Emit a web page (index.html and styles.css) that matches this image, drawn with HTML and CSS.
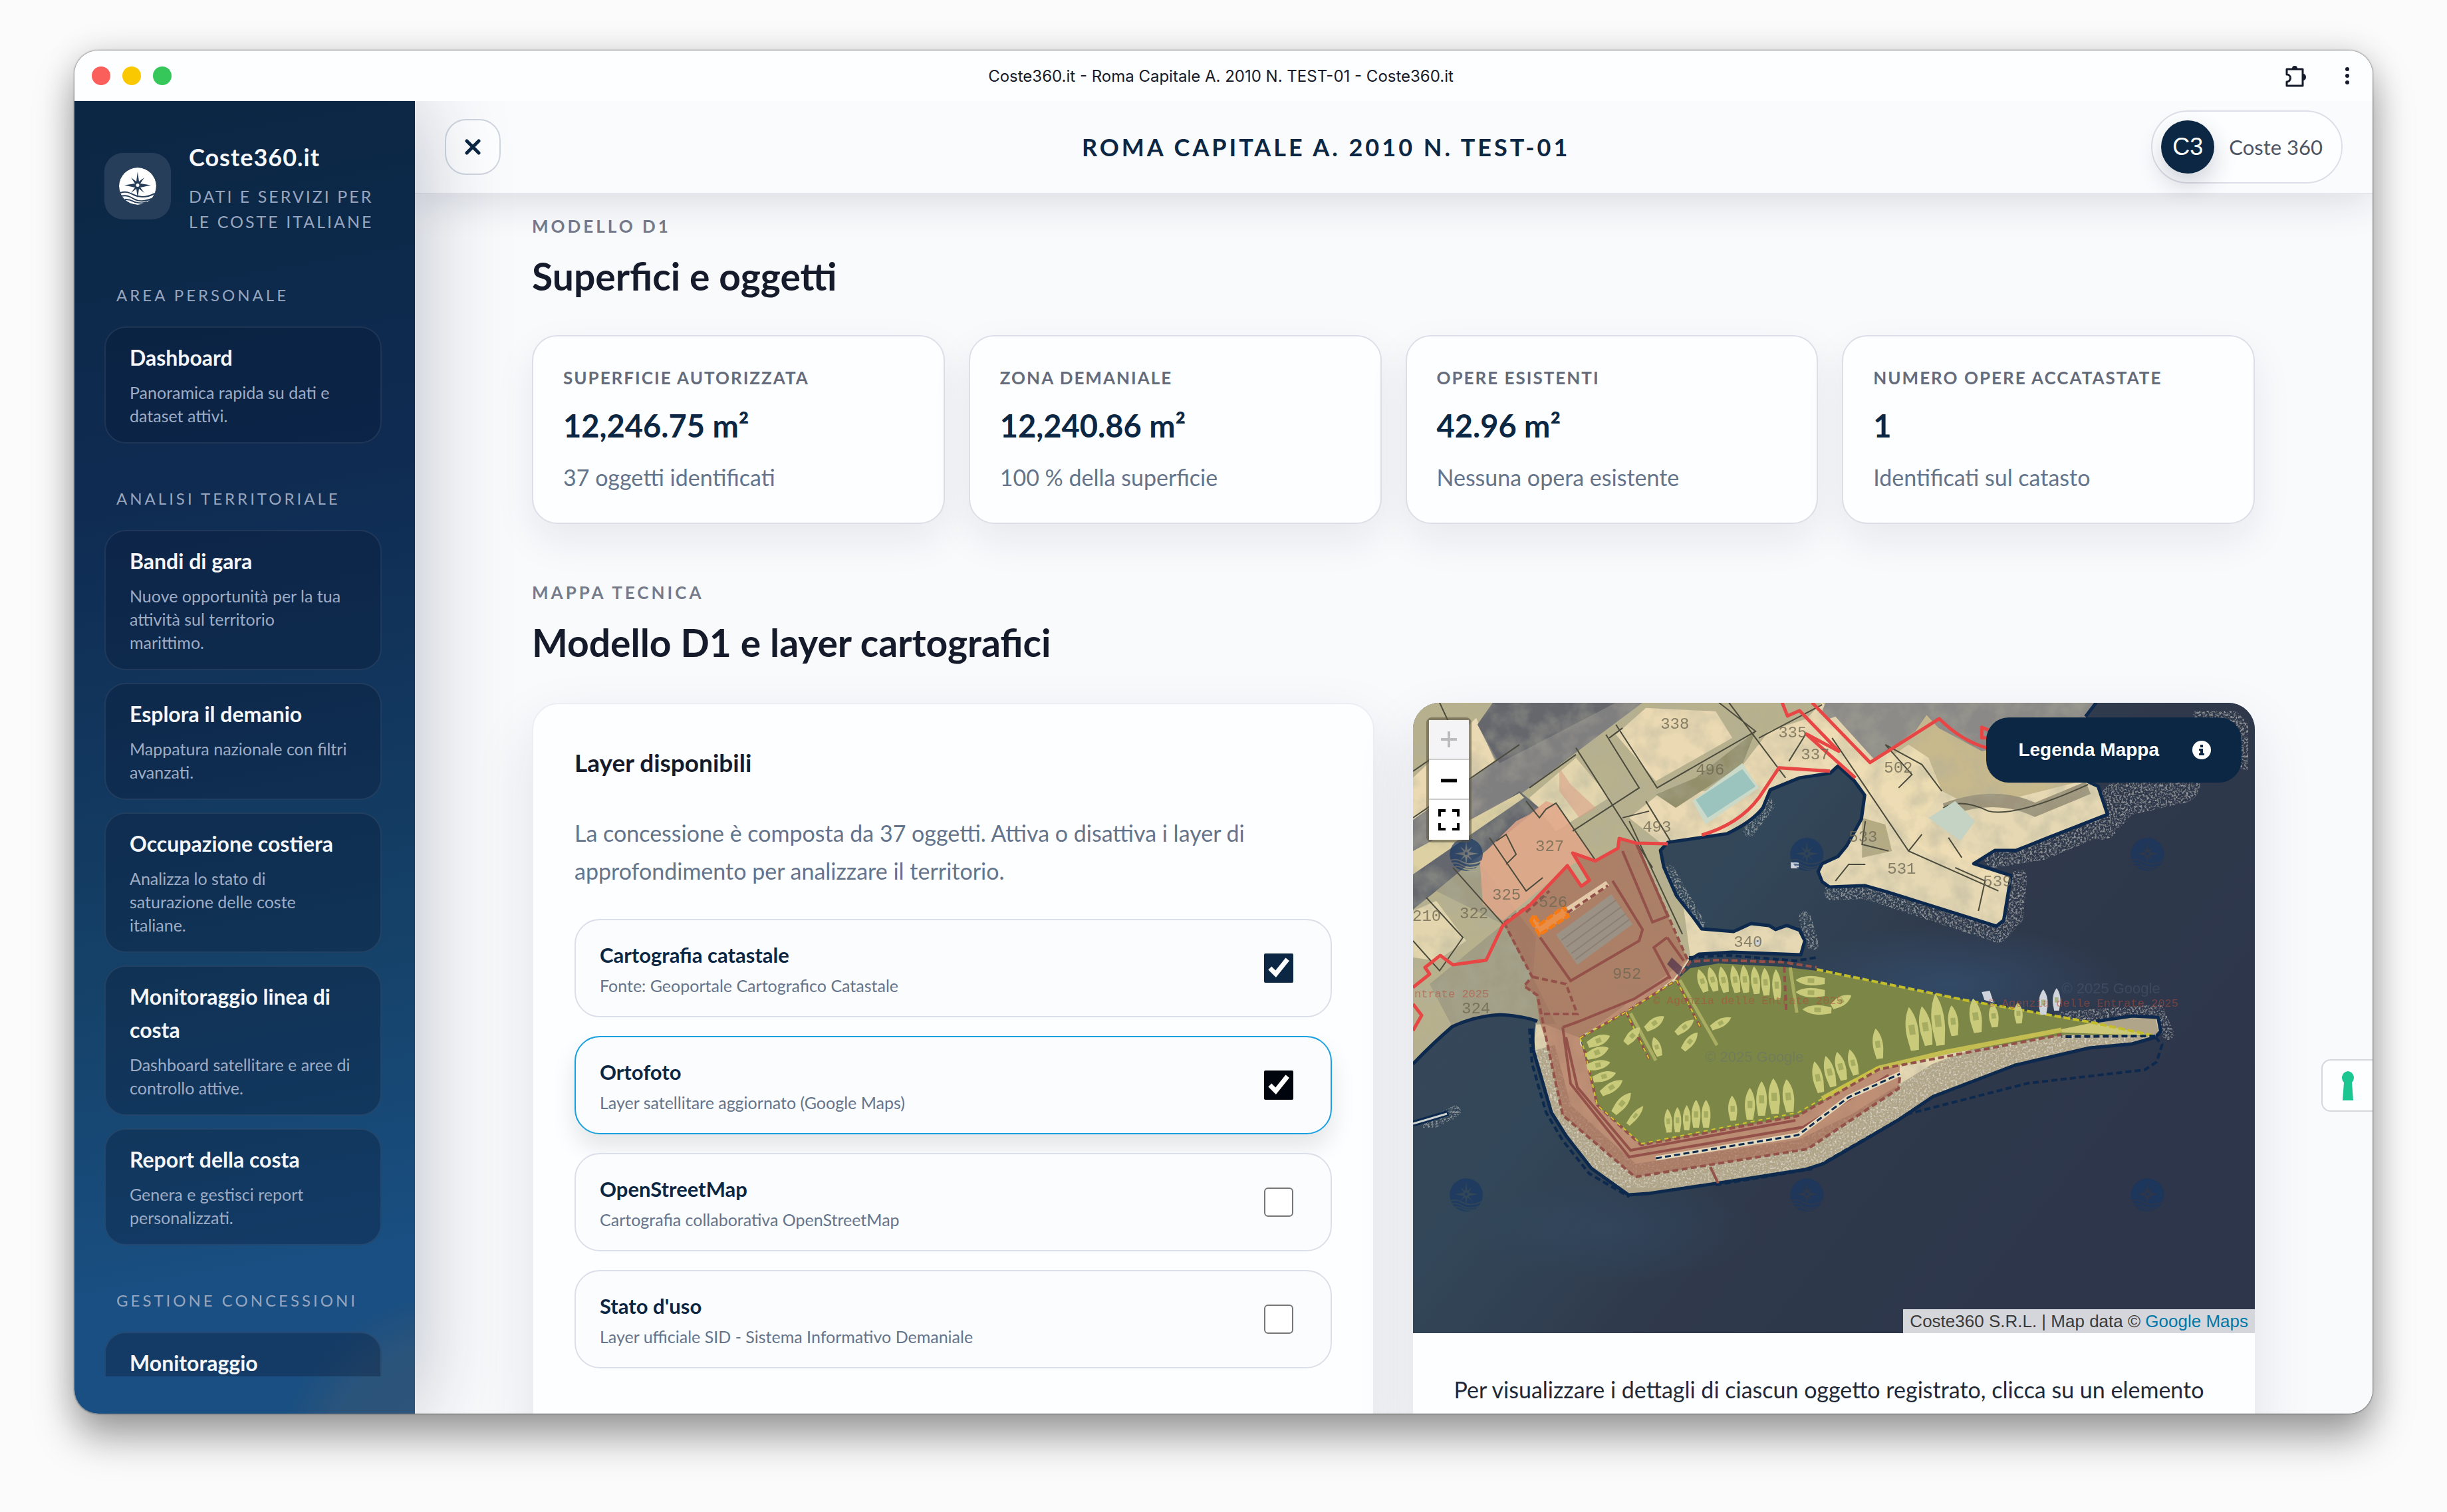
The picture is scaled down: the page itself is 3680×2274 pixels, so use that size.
FILE: index.html
```html
<!DOCTYPE html>
<html lang="it">
<head>
<meta charset="utf-8">
<title>Coste360.it - Roma Capitale A. 2010 N. TEST-01 - Coste360.it</title>
<link rel="stylesheet" href="styles.css">
</head>
<body>
<svg class="defs" aria-hidden="true">
  <defs>
    <mask id="compass-mask">
      <circle cx="28" cy="28" r="28" fill="#fff"/>
      <path fill="#000" d="M28 6L30 21L38 15L32 24L48 26.500L32 30L38 38L30 32L28 46L26 32L18 38L24 30L8 26.500L24 24L18 15L26 21z"/>
      <circle cx="28" cy="26.500" r="2.500" fill="#fff"/>
      <g fill="none" stroke="#000" stroke-width="2">
        <path d="M2 38c9-3 14 0 20 3s16 6 32-2"/>
        <path d="M3 43c9-2 14 1 19 4s14 5 27 0"/>
        <path d="M9 48c8-1 11 3 15 4s11 3 18 0"/>
      </g>
    </mask>
    <symbol id="compass" viewBox="0 0 56 56">
      <circle cx="28" cy="28" r="28" fill="currentColor" mask="url(#compass-mask)"/>
    </symbol>
  </defs>
</svg>

<div class="window">
  <header class="titlebar">
    <div class="lights"><span class="red"></span><span class="yellow"></span><span class="green"></span></div>
    <div class="window-title">Coste360.it - Roma Capitale A. 2010 N. TEST-01 - Coste360.it</div>
    <div class="window-tools">
      <button type="button" aria-label="Estensioni">
        <svg width="34" height="34" viewBox="0 0 34 34"><path d="M3 7h24v25H3v-6a5 5 0 0 0 0-11z" fill="none" stroke="#161b2c" stroke-width="3" stroke-linejoin="round"/><path d="M11 6a4 4 0 0 1 8 0zM28 14a4 5 0 0 1 0 10z" fill="#161b2c"/></svg>
      </button>
      <button type="button" aria-label="Menu">
        <svg width="8" height="34" viewBox="0 0 8 34"><g fill="#161b2c"><circle cx="4" cy="7" r="3"/><circle cx="4" cy="17" r="3"/><circle cx="4" cy="27" r="3"/></g></svg>
      </button>
    </div>
  </header>

  <div class="app">
    <aside class="sidebar">
      <div class="brand">
        <div class="brand-logo"><svg width="56" height="56"><use href="#compass"/></svg></div>
        <div>
          <div class="brand-name">Coste360.it</div>
          <div class="brand-sub">Dati e servizi per<br>le coste italiane</div>
        </div>
      </div>
      <nav class="nav">
        <h2 class="nav-label">Area personale</h2>
        <a class="nav-card" href="#"><strong>Dashboard</strong><span>Panoramica rapida su dati e<br>dataset attivi.</span></a>
        <h2 class="nav-label">Analisi territoriale</h2>
        <a class="nav-card" href="#"><strong>Bandi di gara</strong><span>Nuove opportunità per la tua<br>attività sul territorio<br>marittimo.</span></a>
        <a class="nav-card" href="#"><strong>Esplora il demanio</strong><span>Mappatura nazionale con filtri<br>avanzati.</span></a>
        <a class="nav-card" href="#"><strong>Occupazione costiera</strong><span>Analizza lo stato di<br>saturazione delle coste<br>italiane.</span></a>
        <a class="nav-card" href="#"><strong>Monitoraggio linea di<br>costa</strong><span>Dashboard satellitare e aree di<br>controllo attive.</span></a>
        <a class="nav-card" href="#"><strong>Report della costa</strong><span>Genera e gestisci report<br>personalizzati.</span></a>
        <h2 class="nav-label">Gestione concessioni</h2>
        <a class="nav-card" href="#"><strong>Monitoraggio</strong></a>
      </nav>
    </aside>

    <main class="main">
      <div class="topbar">
        <button class="close" type="button" aria-label="Chiudi menu">
          <svg width="24" height="24" viewBox="0 0 24 24"><path d="M3 3l18 18M21 3L3 21" stroke="#0b2743" stroke-width="5" stroke-linecap="round"/></svg>
        </button>
        <h1>Roma Capitale A. 2010 N. TEST-01</h1>
        <button class="user" type="button"><span class="avatar">C3</span>Coste 360</button>
      </div>

      <div class="content">
        <p class="eyebrow">Modello D1</p>
        <h2 class="title">Superfici e oggetti</h2>
        <div class="metrics">
          <article class="metric"><h3>Superficie autorizzata</h3><strong>12,246.75 m²</strong><p>37 oggetti identificati</p></article>
          <article class="metric"><h3>Zona demaniale</h3><strong>12,240.86 m²</strong><p>100 % della superficie</p></article>
          <article class="metric"><h3>Opere esistenti</h3><strong>42.96 m²</strong><p>Nessuna opera esistente</p></article>
          <article class="metric"><h3>Numero opere accatastate</h3><strong>1</strong><p>Identificati sul catasto</p></article>
        </div>

        <p class="eyebrow">Mappa tecnica</p>
        <h2 class="title">Modello D1 e layer cartografici</h2>
        <div class="panels">
          <section class="layers">
            <h3>Layer disponibili</h3>
            <p>La concessione è composta da 37 oggetti. Attiva o disattiva i layer di<br>approfondimento per analizzare il territorio.</p>
            <div class="options">
              <label class="option"><span><strong>Cartografia catastale</strong><small>Fonte: Geoportale Cartografico Catastale</small></span><input type="checkbox" checked></label>
              <label class="option active"><span><strong>Ortofoto</strong><small>Layer satellitare aggiornato (Google Maps)</small></span><input type="checkbox" checked></label>
              <label class="option"><span><strong>OpenStreetMap</strong><small>Cartografia collaborativa OpenStreetMap</small></span><input type="checkbox"></label>
              <label class="option"><span><strong>Stato d'uso</strong><small>Layer ufficiale SID - Sistema Informativo Demaniale</small></span><input type="checkbox"></label>
            </div>
          </section>

          <section class="map-card">
            <div class="map">
              <svg class="map-drawing" viewBox="25 17 1266 948" preserveAspectRatio="xMidYMid slice" role="img" aria-label="Mappa della concessione">
                <defs>
                  <linearGradient id="sea" x1="0" y1="0" x2="1" y2=".6"><stop offset="0" stop-color="#3b4656"/><stop offset=".4" stop-color="#324759"/><stop offset=".65" stop-color="#2f394b"/><stop offset="1" stop-color="#2d364b"/></linearGradient>
                  <radialGradient id="basin"><stop offset="0" stop-color="#34567a" stop-opacity=".6"/><stop offset="1" stop-color="#34567a" stop-opacity="0"/></radialGradient>
                  <filter id="rocks" x="0" y="0" width="1" height="1">
                    <feTurbulence type="fractalNoise" baseFrequency=".32" numOctaves="3" seed="4"/>
                    <feColorMatrix values="0 1.200 0 0 .1  0 1.200 0 0 .08  0 1.200 0 0 .02  5 0 0 0 -2.300"/>
                    <feComposite operator="in" in2="SourceGraphic"/>
                  </filter>
                  <filter id="ground" x="0" y="0" width="1" height="1">
                    <feTurbulence type="fractalNoise" baseFrequency=".03" numOctaves="4" seed="9"/>
                    <feColorMatrix values="0 0 0 0 .42  0 0 0 0 .42  0 0 0 0 .32  2.400 0 0 0 -.95"/>
                    <feComposite operator="in" in2="SourceGraphic"/>
                  </filter>
                  <path id="mainland" d="M25 17V560Q55 529 84 504Q118 488 156 486L210 495L206 540L233 633L255 668L293 717L349 757L378 755L472 741L614 719L642 710L699 677L755 644L807 609L930 562L1042 536L1106 530L1141 520L1149 511L1145 490L1106 488L1052 496L1004 509L827 542L726 565L604 635L368 682L302 622L276 521L345 482L421 434L440 404L455 395L505 392L608 396L614 375L606 359L587 352L570 358L560 352L533 349L507 361L459 357L446 339L421 307L402 264L397 239L408 227L497 214Q535 196 551 175L562 148L606 130L652 123L664 112L688 134L704 156L699 192L677 232L664 248L640 259L634 271L640 286L651 294L704 292L736 301L902 353L913 344L924 277L868 259L900 239L932 239L972 223L1069 185L1055 143L1036 134V38L1052 17Z"/>
                  <clipPath id="land-clip"><use href="#mainland"/></clipPath>
                  <symbol id="boat" viewBox="0 0 14 44" preserveAspectRatio="none"><path d="M7 0C12 8 14 18 13 30L11 44H3L1 30C0 18 2 8 7 0z"/><path d="M4 18h6v10H4z" fill="#8f9950" opacity=".6"/></symbol>
                </defs>

                <rect x="25" y="17" width="1266" height="948" fill="url(#sea)"/>
                <ellipse cx="830" cy="440" rx="260" ry="90" fill="url(#basin)"/>
                <ellipse cx="330" cy="810" rx="220" ry="80" fill="url(#basin)" opacity=".4"/>

                <!-- riprap around the coast -->
                <g fill="none" stroke-linejoin="round" stroke-linecap="round" opacity=".5" filter="url(#rocks)">
                  <path d="M655 302L704 300L736 310L905 366L930 340L936 280" stroke="#fff" stroke-width="24"/>
                  <path d="M900 248L972 236L1070 195" stroke="#fff" stroke-width="34"/>
                  <path d="M1060 195L1090 160L1180 140M1225 30L1280 90" stroke="#fff" stroke-width="56"/>
                  <path d="M560 170L530 210M455 350L410 270M614 340L626 380M1000 490L1145 480L1160 515M40 655L88 632" stroke="#fff" stroke-width="18"/>
                </g>

                <use href="#mainland" fill="#e6d8b3"/>
                <g clip-path="url(#land-clip)">
                  <path d="M25 17H150L410 17L640 17L420 240L442 400L276 521L210 495L84 504L25 560Z" fill="#b8b18e"/>
                  <path d="M25 130L120 40L150 110L25 220zM330 65L375 25L480 30L505 70L390 135zM490 150L560 60L650 30V120L562 148L497 214L400 230L350 190L400 150z" fill="#ead9b2"/>
                  <path d="M25 330L60 315L105 375L60 405L25 400zM200 160L270 100L320 160L240 210z" fill="#e3d6ae"/>
                  <path d="M390 155L450 130L540 60L520 110L420 175z" fill="#938f6b"/>
                  <path d="M25 193L150 105L122 50L145 17H370L278 86L200 145L25 265z" fill="#807f80"/>
                  <path d="M122 50L145 17H330L155 108z" fill="#66676d"/>
                  <path d="M25 265L185 150L215 175L25 328z" fill="#64676d"/>
                  <path d="M25 240L185 153L192 160L25 275z" fill="#ddd0a2"/>
                  <path d="M160 350L60 300L120 250L210 370L205 430L240 500L84 504L50 440z" fill="#a19d85"/>
                  <path d="M640 17H1050V130L870 175L820 150L730 80L690 60z" fill="#c8b98d"/>
                  <path d="M645 17H810L780 60L715 105L640 30z" fill="#8c8b88"/>
                  <path d="M780 17H1050V60L880 90L815 55z" fill="#8b8987"/>
                  <path d="M640 45L660 38L830 225L905 262L895 285L800 245L640 110z" fill="#eddcb4"/>
                  <path d="M720 115L770 80L800 100L820 150L790 190z" fill="#ecdcb2"/>
                  <path d="M700 190L735 200L745 240L700 250z" fill="#b5ab83"/>
                  <path d="M825 178Q900 150 960 178L1040 145" fill="none" stroke="#9d947b" stroke-width="20"/>
                  <rect x="25" y="17" width="1266" height="948" filter="url(#ground)" opacity=".4"/>
                  <path d="M206 540L233 640L349 745L614 706L700 665L820 590L930 550L1145 510" fill="none" stroke="#b0a588" stroke-width="66"/>
                  <path d="M206 540L233 640L349 745L614 706L700 665L820 590L930 550L1145 515" fill="none" stroke="#fff" stroke-width="66" filter="url(#rocks)" opacity=".55"/>
                </g>

                <!-- parcels -->
                <path d="M180 195L200 185L225 165L240 170L295 245L265 260L225 290L160 345L130 320L125 250z" fill="#e2a78a" opacity=".85"/>
                <path d="M245 115L262 140L300 175L275 190L245 150z" fill="#d9a088" opacity=".6"/>
                <g fill="none" stroke="#4b4b3d" stroke-width="2">
                  <path d="M25 190L185 80M65 17L85 60M270 85L385 265M195 165L215 190L225 177L240 168L300 255M200 145L270 95M315 65L365 145L265 210M330 50L392 145L540 60L485 17M500 17L585 130M320 70L340 55M375 165L415 230M350 195L430 365M545 70L640 20M590 105L615 65M85 265L165 355M140 220L195 300L220 280M150 225L165 215L180 245L165 260M25 375L65 420L100 370L45 310M340 190L380 180M735 80L775 125L755 145M735 80L790 110L820 150M655 70L770 240L905 300M770 240L790 215M830 220L850 250M705 195L700 230L740 240M25 120L90 75"/>
                  <path d="M822 175Q850 160 890 180Q930 190 1040 140M875 330L885 285L840 265M660 285L680 260L705 260"/>
                </g>
                <path d="M445 165L520 108L545 145L465 200z" fill="#cbd9c8"/>
                <path d="M450 163L520 117L540 143L468 190z" fill="#9cc4bf"/>
                <path d="M800 190L840 165L870 195L848 225z" fill="#c5d3c5"/>

                <!-- coastline -->
                <g fill="none" stroke="#0d294d" stroke-width="5" stroke-linejoin="round">
                  <path d="M25 560Q55 529 84 504Q118 488 156 486Q190 488 212 496"/>
                  <path d="M204 507L206 540L233 633L255 668L293 717L349 757L378 755L472 741L614 719L642 710L699 677L755 644L807 609L930 562L1042 536L1106 530L1141 520L1149 511L1145 490L1106 488L1052 496"/>
                  <path d="M440 404L455 395L505 392L608 396L614 375L606 359L587 352L570 358L560 352L533 349L507 361L459 357L446 339L421 307L402 264L397 239L408 227L497 214Q535 196 551 175L562 148L606 130L652 123L664 112L688 134L704 156L699 192L677 232L664 248L640 259L634 271L640 286L651 294L704 292L736 301L902 353L913 344L924 277L868 259L900 239L932 239L972 223L1069 185L1055 143L1036 134M1036 38L1052 17"/>
                </g>
                <path d="M25 650L78 634" stroke="#0d294d" stroke-width="9"/><path d="M25 650L76 635" stroke="#cfd3cf" stroke-width="3"/>

                <!-- concession: works, basin, facility -->
                <path d="M162 348L200 321L257 262L278 293L290 284L265 243L299 255L333 236L335 221L360 228L404 328L438 404L417 432L358 475L276 518L276 530L283 540L302 622L368 682L604 635L726 565L757 558L755 597L618 688L359 730L250 637L229 540L215 495L210 457L192 443L204 429L168 364z" fill="#a5624f" fill-opacity=".62"/>
                <path d="M240 366L323 305L355 350L272 411z" fill="#9c9185"/>
                <g stroke="#8c7f74" stroke-width="2"><path d="M248 374L330 314M256 384L338 324M263 394L345 334M269 403L350 343"/></g>
                <path d="M255 325L315 285L320 292L262 333z" fill="#e4c9a8"/>
                <path d="M407 410L414 400L430 415L425 428z" fill="#4b2d48" opacity=".7"/>
                <path d="M276 521L345 482L421 434L442 416L484 409L581 414L640 421L854 464L1047 498L1141 518L1005 516L827 545L726 568L604 638L368 682L302 622L283 540z" fill="#7c8646"/>
                <path d="M980 512L1047 498L1141 518z" fill="#cdc778"/>
                <path d="M640 612L726 566L827 542L1000 509" fill="none" stroke="#c4bd52" stroke-width="7"/>
                <g fill="none" stroke="#93514a" stroke-width="4">
                  <path d="M216 370L262 435L365 375L370 358L325 285M340 240L385 347L408 338L362 232M407 370L387 385L412 432M407 370L432 405M275 496L358 462L412 428M250 505L275 496M250 505L262 590L350 700L612 655L740 577M255 520L272 595L352 690L600 645M472 715L484 740"/>
                  <path stroke-dasharray="9 5" d="M162 348L204 429L192 443L212 457L229 540L250 637L359 730L618 688L755 597L757 578M222 485L272 485L255 440L204 429M276 521L345 482L421 434L442 406L484 404L581 407L632 415M345 482L382 557M421 434L457 505M583 414L586 480M283 540L302 622L368 682L604 638L726 568L1000 516M360 228L438 404M195 332L230 300M257 333L318 292M162 348L200 321"/>
                </g>
                <g fill="none" stroke="#d2c62c" stroke-width="2" stroke-dasharray="6 6"><path d="M276 521L345 482L421 434M345 482L382 557M421 434L457 505M276 521L283 540L302 622L368 680L604 633L726 563"/></g>
                <g fill="none" stroke="#c3bd2b" stroke-width="4" stroke-dasharray="10 4"><path d="M632 418L660 424L854 464L1047 498L1141 518"/></g>
                <path d="M202 345L215 366L258 338L252 324L216 350L207 336z" fill="#e98f4a" stroke="#f47a16" stroke-width="5" stroke-dasharray="11 3"/>
                <g fill="none" stroke="#0d294d" stroke-width="4" stroke-dasharray="9 5">
                  <path d="M200 507L204 560L225 633L250 675L290 725L350 760M440 400L500 397L600 405L632 400M1141 518L1000 519M1141 520L1151 531L1143 557L1125 569L950 589L770 635L640 710M480 742L625 718"/>
                </g>
                <path d="M390 702L604 667L680 610L757 575" fill="none" stroke="#e5d9bd" stroke-width="7"/>
                <path d="M390 702L604 667L680 610L757 575" fill="none" stroke="#0d294d" stroke-width="3" stroke-dasharray="9 5"/>

                <!-- state limit -->
                <g fill="none" stroke="#e84545" stroke-width="5" stroke-linejoin="round">
                  <path d="M25 510L38 487L25 470M25 445L50 425L43 415L66 397L85 411L135 404L160 352L200 322L257 262L278 293L290 284L265 243L299 255L333 236L335 221L360 228L408 229M459 216Q515 200 545 160L575 115L652 120M580 17L588 37L606 29L665 90L616 64L690 130M625 17L712 107L816 41Q850 75 888 85M888 70H880V54L890 58"/>
                </g>

                <!-- piers and boats -->
                <g stroke="#a9ad62" stroke-width="5"><path d="M352 484L390 555M426 434L482 532M592 415L602 483"/></g>
                <g fill="#c9cb7b">
                  <use href="#boat" width="15" height="36" transform="translate(447 420) rotate(-18)"/>
                  <use href="#boat" width="15" height="38" transform="translate(463 416) rotate(-15)"/>
                  <use href="#boat" width="15" height="40" transform="translate(480 415) rotate(-12)"/>
                  <use href="#boat" width="15" height="42" transform="translate(498 413) rotate(-10)"/>
                  <use href="#boat" width="15" height="42" transform="translate(514 412) rotate(-6)"/>
                  <use href="#boat" width="15" height="42" transform="translate(530 414) rotate(-6)"/>
                  <use href="#boat" width="15" height="42" transform="translate(546 416) rotate(-4)"/>
                  <use href="#boat" width="15" height="46" transform="translate(563 418) rotate(-3)"/>
                  <use href="#boat" width="16" height="44" transform="translate(600 442) rotate(-88)"/>
                  <use href="#boat" width="16" height="44" transform="translate(600 460) rotate(-88)"/>
                  <use href="#boat" width="16" height="44" transform="translate(610 486) rotate(-88)"/>
                  <use href="#boat" width="16" height="34" transform="translate(680 450) rotate(60)"/>
                  <use href="#boat" width="16" height="34" transform="translate(398 482) rotate(55)"/>
                  <use href="#boat" width="16" height="32" transform="translate(360 500) rotate(42)"/>
                  <use href="#boat" width="14" height="34" transform="translate(443 488) rotate(52)"/>
                  <use href="#boat" width="15" height="34" transform="translate(447 508) rotate(40)"/>
                  <use href="#boat" width="14" height="34" transform="translate(500 484) rotate(62)"/>
                  <use href="#boat" width="14" height="30" transform="translate(380 522) rotate(-18)"/>
                  <use href="#boat" width="17" height="36" transform="translate(318 510) rotate(68)"/>
                  <use href="#boat" width="17" height="36" transform="translate(316 528) rotate(68)"/>
                  <use href="#boat" width="16" height="36" transform="translate(320 550) rotate(78)"/>
                  <use href="#boat" width="16" height="36" transform="translate(328 566) rotate(74)"/>
                  <use href="#boat" width="16" height="38" transform="translate(336 578) rotate(58)"/>
                  <use href="#boat" width="17" height="40" transform="translate(346 598) rotate(40)"/>
                  <use href="#boat" width="11" height="36" transform="translate(367 620) rotate(40)"/>
                  <use href="#boat" width="13" height="36" transform="translate(401 628) rotate(-4)"/>
                  <use href="#boat" width="13" height="38" transform="translate(416 625)"/>
                  <use href="#boat" width="13" height="38" transform="translate(430 622)"/>
                  <use href="#boat" width="15" height="42" transform="translate(443 614)"/>
                  <use href="#boat" width="15" height="42" transform="translate(458 614)"/>
                  <use href="#boat" width="15" height="38" transform="translate(497 608) rotate(-3)"/>
                  <use href="#boat" width="17" height="48" transform="translate(523 596)"/>
                  <use href="#boat" width="18" height="52" transform="translate(540 586)"/>
                  <use href="#boat" width="19" height="54" transform="translate(557 582) rotate(-3)"/>
                  <use href="#boat" width="19" height="50" transform="translate(577 584) rotate(-6)"/>
                  <use href="#boat" width="17" height="48" transform="translate(620 558) rotate(-12)"/>
                  <use href="#boat" width="17" height="48" transform="translate(637 550) rotate(-14)"/>
                  <use href="#boat" width="17" height="44" transform="translate(654 544) rotate(-14)"/>
                  <use href="#boat" width="15" height="40" transform="translate(674 540) rotate(-14)"/>
                  <use href="#boat" width="17" height="46" transform="translate(712 508) rotate(-8)"/>
                  <use href="#boat" width="21" height="66" transform="translate(760 476) rotate(-8)"/>
                  <use href="#boat" width="20" height="60" transform="translate(780 475) rotate(-10)"/>
                  <use href="#boat" width="22" height="78" transform="translate(799 456) rotate(-6)"/>
                  <use href="#boat" width="17" height="46" transform="translate(826 473) rotate(-6)"/>
                  <use href="#boat" width="20" height="52" transform="translate(857 463) rotate(-8)"/>
                  <use href="#boat" width="16" height="36" transform="translate(888 470) rotate(-6)"/>
                  <use href="#boat" width="14" height="32" transform="translate(927 468) rotate(-4)"/>
                </g>
                <g fill="#cfd4dc">
                  <use href="#boat" width="15" height="38" transform="translate(965 448)"/>
                  <use href="#boat" width="13" height="34" transform="translate(986 446)"/>
                  <path d="M880 452l12-2 6 18-14-4zM593 257h12v9h-12zM538 373h11v8h-11z"/>
                </g>

                <!-- parcel numbers -->
                <g class="parcel">
                  <text x="209" y="240">327</text><text x="144" y="313">325</text><text x="24" y="345">210</text><text x="95" y="341">322</text>
                  <text x="98" y="484">324</text><text x="397" y="56">338</text><text x="574" y="69">335</text><text x="608" y="102">337</text>
                  <text x="450" y="125">496</text><text x="507" y="384">340</text><text x="738" y="274">531</text><text x="680" y="226">533</text>
                  <text x="882" y="293">539</text><text x="733" y="122">502</text><text x="370" y="211">493</text><text x="325" y="432">952</text><text x="214" y="324">526</text>
                </g>
                <g class="credit">
                  <text x="890" y="474">© Agenzia delle Entrate 2025</text>
                  <text x="386" y="470">© Agenzia delle Entrate 2025</text>
                  <text x="27" y="460">ntrate 2025</text>
                </g>
                <g class="copyright"><text x="1000" y="454">© 2025 Google</text><text x="464" y="557">© 2025 Google</text></g>

                <g color="#183763" opacity=".7">
                  <use href="#compass" x="80" y="220" width="50" height="50"/><use href="#compass" x="592" y="220" width="50" height="50"/><use href="#compass" x="1104" y="220" width="50" height="50"/>
                  <use href="#compass" x="80" y="732" width="50" height="50"/><use href="#compass" x="592" y="732" width="50" height="50"/><use href="#compass" x="1104" y="732" width="50" height="50"/>
                </g>
              </svg>
              <div class="zoom">
                <button type="button" aria-label="Ingrandisci" disabled><svg width="24" height="24"><path d="M12 0v24M0 12h24" stroke="#bbb" stroke-width="4"/></svg></button>
                <button type="button" aria-label="Riduci"><svg width="24" height="24"><path d="M0 14h24" stroke="#000" stroke-width="5"/></svg></button>
                <button type="button" aria-label="Schermo intero"><svg width="32" height="32"><path d="M2 11V2h9M21 2h9v9M30 21v9h-9M11 30H2v-9" fill="none" stroke="#000" stroke-width="4"/></svg></button>
              </div>
              <button class="legend" type="button">Legenda Mappa
                <svg width="28" height="28" viewBox="0 0 28 28"><circle cx="14" cy="14" r="14" fill="#fff"/><path d="M12 6h4v4h-4zM10 12h6v7h2v3h-8v-3h2v-4h-2z" fill="#0b2743"/></svg>
              </button>
              <div class="attribution">Coste360 S.R.L. | Map data © <a href="#">Google Maps</a></div>
            </div>
            <p>Per visualizzare i dettagli di ciascun oggetto registrato, clicca su un elemento</p>
          </section>
        </div>
      </div>
    </main>
    <button class="consent" type="button" aria-label="Preferenze privacy">
      <svg width="20" height="44" viewBox="0 0 20 44"><path d="M10 0a10 10 0 0 1 6 17l2 27H2l2-27A10 10 0 0 1 10 0z" fill="#1cc691"/></svg>
    </button>
  </div>
</div>
</body>
</html>
```

FILE: styles.css
```css
* {
    box-sizing: border-box;
}
body {
    margin: 0;
    height: 100vh;
    padding: 76px 112px 148px;
    display: flex;
    background: #fbfbfb;
    font-family: Lato, "Open Sans", sans-serif;
    color: #161b2c;
    overflow: hidden;
}
h1, h2, h3, p {
    margin: 0;
}
button {
    font: inherit;
    border: none;
    background: none;
    padding: 0;
    cursor: pointer;
}
a {
    text-decoration: none;
}
.defs {
    position: absolute;
    width: 0;
    height: 0;
}

/* window frame */
.window {
    flex: 1;
    display: flex;
    flex-direction: column;
    border-radius: 36px;
    overflow: hidden;
    box-shadow: 0 0 2px 1px rgba(0,0,0,.35), 0 36px 60px rgba(0,0,0,.36), 0 0 50px rgba(0,0,0,.12);
}
.titlebar {
    position: relative;
    z-index: 5;
    display: grid;
    grid-template-columns: 1fr auto 1fr;
    align-items: center;
    height: 76px;
    flex: none;
    padding: 0 34px 0 26px;
    background: #fdfeff;
}
.lights {
    display: flex;
    gap: 18px;
}
.lights span {
    width: 28px;
    height: 28px;
    border-radius: 50%;
}
.red { background: #fb5f5c; }
.yellow { background: #fac800; }
.green { background: #35c759; }
.window-title {
    font: 24px Inter, sans-serif;
}
.window-tools {
    display: flex;
    justify-content: flex-end;
    align-items: center;
    gap: 56px;
}
.window-tools svg {
    display: block;
}
.app {
    flex: 1;
    min-height: 0;
    display: flex;
    position: relative;
}

/* sidebar */
.sidebar {
    width: 512px;
    flex: none;
    display: flex;
    flex-direction: column;
    padding: 56px 50px 56px 45px;
    background: radial-gradient(circle at 110% 104%, #2f557c 0, #2b547b 180px, transparent 260px), linear-gradient(170deg, #0b2743 0%, #0f2b52 30%, #154269 66%, #194f82 88%);
    box-shadow: 0 0 130px rgba(15,30,60,.28);
    z-index: 3;
}
.brand {
    display: flex;
    align-items: center;
    gap: 27px;
    margin-bottom: 73px;
}
.brand-logo {
    width: 100px;
    height: 100px;
    flex: none;
    display: grid;
    place-items: center;
    border-radius: 28px;
    background: #263e5a;
    color: #fff;
}
.brand-name {
    font-size: 36px;
    line-height: 56px;
    font-weight: 700;
    letter-spacing: 1px;
    color: #f6f8fb;
    margin-bottom: 12px;
}
.brand-sub, .nav-label {
    font-size: 24px;
    line-height: 38px;
    font-weight: 400;
    letter-spacing: 4px;
    text-transform: uppercase;
    white-space: nowrap;
    color: #97a5be;
}
.brand-sub {
    font-size: 25px;
    letter-spacing: 3px;
}
.nav {
    flex: 1;
    min-height: 0;
    overflow: hidden;
    display: flex;
    flex-direction: column;
    gap: 19px;
}
.nav-label {
    padding: 0 18px;
    margin: 45px 0 9px;
}
.nav-label:first-child {
    margin-top: 0;
}
.nav-card {
    flex: none;
    padding: 20px 36px 22px;
    border: 2px solid rgba(130,150,180,.16);
    border-radius: 32px;
    background: rgba(8,24,52,.36);
}
.nav-card strong {
    display: block;
    font-size: 32px;
    line-height: 50px;
    color: #f5f6fa;
    margin-bottom: 10px;
    white-space: nowrap;
}
.nav-card span {
    display: block;
    font-size: 25px;
    line-height: 35px;
    color: #9eacc5;
    white-space: nowrap;
}

/* main column */
.main {
    flex: 1;
    min-width: 0;
    background: #f9fafc;
}
.topbar {
    position: relative;
    z-index: 2;
    height: 140px;
    display: flex;
    align-items: center;
    justify-content: space-between;
    padding: 0 45px;
    background: #fafbfd;
    border-bottom: 2px solid #e5e7ec;
    box-shadow: 0 10px 60px rgba(15,30,60,.14);
}
.close {
    width: 84px;
    height: 84px;
    display: grid;
    place-items: center;
    border: 2px solid #cfd6df;
    border-radius: 32px;
    background: #fdfeff;
}
.topbar h1 {
    font-size: 36px;
    font-weight: 700;
    letter-spacing: 4px;
    text-transform: uppercase;
    color: #0b2743;
}
.user {
    height: 110px;
    display: flex;
    align-items: center;
    gap: 22px;
    padding: 0 28px 0 13px;
    border: 2px solid #dcdfe7;
    border-radius: 55px;
    background: #fdfeff;
    font-size: 31px;
    color: #4b5563;
}
.avatar {
    width: 80px;
    height: 80px;
    border-radius: 50%;
    background: #0b2743;
    color: #fff;
    font: 36px/80px "Liberation Sans", sans-serif;
    box-shadow: 0 16px 36px rgba(15,30,60,.2);
}
.content {
    padding: 28px 177px 0 176px;
}
.eyebrow {
    font-size: 26px;
    line-height: 40px;
    font-weight: 700;
    letter-spacing: 4px;
    text-transform: uppercase;
    color: #757b8b;
    margin-bottom: 17px;
}
.title {
    font-size: 57px;
    line-height: 76px;
    font-weight: 700;
    margin-bottom: 51px;
}
.metrics {
    display: grid;
    grid-template-columns: repeat(4, 1fr);
    gap: 36px;
    margin-bottom: 83px;
}
.metric {
    padding: 40px 45px;
    border: 2px solid #dcdfe7;
    border-radius: 38px;
    background: #fdfeff;
    box-shadow: 0 24px 60px rgba(15,30,60,.08);
}
.metric h3 {
    font-size: 26px;
    line-height: 44px;
    font-weight: 700;
    letter-spacing: 2px;
    text-transform: uppercase;
    color: #646b7b;
}
.metric strong {
    display: block;
    margin: 18px 0;
    font-size: 47px;
    line-height: 64px;
    color: #0b2743;
}
.metric p {
    font-size: 34px;
    line-height: 56px;
    color: #64748b;
}
.panels {
    display: grid;
    grid-template-columns: 1fr 1fr;
    gap: 58px;
    padding-top: 2px;
}
.layers, .map-card {
    min-width: 0;
    border-radius: 40px;
    background: #fdfeff;
    box-shadow: 0 36px 90px rgba(15,30,60,.11);
}
.layers {
    padding: 60px 62px 72px;
    border: 2px solid #eceef2;
}
.layers h3 {
    font-size: 37px;
    line-height: 56px;
    margin-bottom: 49px;
}
.layers p {
    font-size: 34px;
    line-height: 57px;
    color: #64748b;
    margin-bottom: 44px;
}
.options {
    display: grid;
    gap: 28px;
}
.option {
    display: flex;
    align-items: center;
    justify-content: space-between;
    padding: 28px 56px 28px 36px;
    border: 2px solid #dbdfe7;
    border-radius: 38px;
    background: #fbfcfe;
}
.option strong {
    display: block;
    font-size: 31px;
    line-height: 48px;
    margin-bottom: 4px;
    color: #0b2743;
}
.option small {
    display: block;
    font-size: 25px;
    line-height: 36px;
    color: #64748b;
}
.option input {
    width: 44px;
    height: 44px;
    margin: 0;
    accent-color: #0b2743;
}
.option input:not(:checked) {
    appearance: none;
    border: 2px solid #767676;
    border-radius: 6px;
    background: #fff;
}
.option.active {
    border-color: #18a0e0;
    box-shadow: 0 20px 36px rgba(0,0,0,.1);
}
.option.active input {
    accent-color: #00040c;
}

/* map */
.map-card {
    overflow: hidden;
}
.map {
    position: relative;
    height: 948px;
    background: #303a4c;
}
.map-drawing {
    display: block;
    width: 100%;
    height: 100%;
}
.map-card p {
    padding: 57px 62px;
    font-size: 34px;
    line-height: 56px;
    white-space: nowrap;
    color: #1f2937;
}
.parcel {
    font: 24px "Liberation Mono", monospace;
    fill: #6e6853;
    opacity: .8;
}
.credit {
    font: 17px "Liberation Mono", monospace;
    fill: #b34a38;
    opacity: .55;
}
.copyright {
    font: 22px "Liberation Sans", sans-serif;
    fill: #5a6a80;
    opacity: .35;
}
.zoom {
    position: absolute;
    top: 22px;
    left: 20px;
    display: grid;
    border: 4px solid rgba(90,85,65,.6);
    border-radius: 8px;
}
.zoom button {
    width: 60px;
    height: 60px;
    display: grid;
    place-items: center;
    background: #fff;
    border-bottom: 2px solid #ccc;
}
.zoom button:disabled {
    background: #f4f4f6;
}
.zoom button:last-child {
    border-bottom: none;
}
.legend {
    position: absolute;
    top: 22px;
    right: 20px;
    height: 98px;
    display: flex;
    align-items: center;
    gap: 50px;
    padding: 0 46px 0 48px;
    border-radius: 34px;
    background: #0b2743;
    color: #fff;
    font: 700 28px "Liberation Sans", sans-serif;
}
.attribution {
    position: absolute;
    right: 0;
    bottom: 0;
    padding: 0 10px;
    background: rgba(255,255,255,.8);
    color: #3a3a3a;
    font: 26px/36px "Liberation Sans", sans-serif;
}
.attribution a {
    color: #0078a8;
}
.consent {
    position: absolute;
    right: 0;
    top: 1441px;
    width: 77px;
    height: 79px;
    display: grid;
    place-items: center;
    z-index: 4;
    border: 2px solid #d5d7db;
    border-right: none;
    border-radius: 14px 0 0 14px;
    background: #fdfeff;
}
```
